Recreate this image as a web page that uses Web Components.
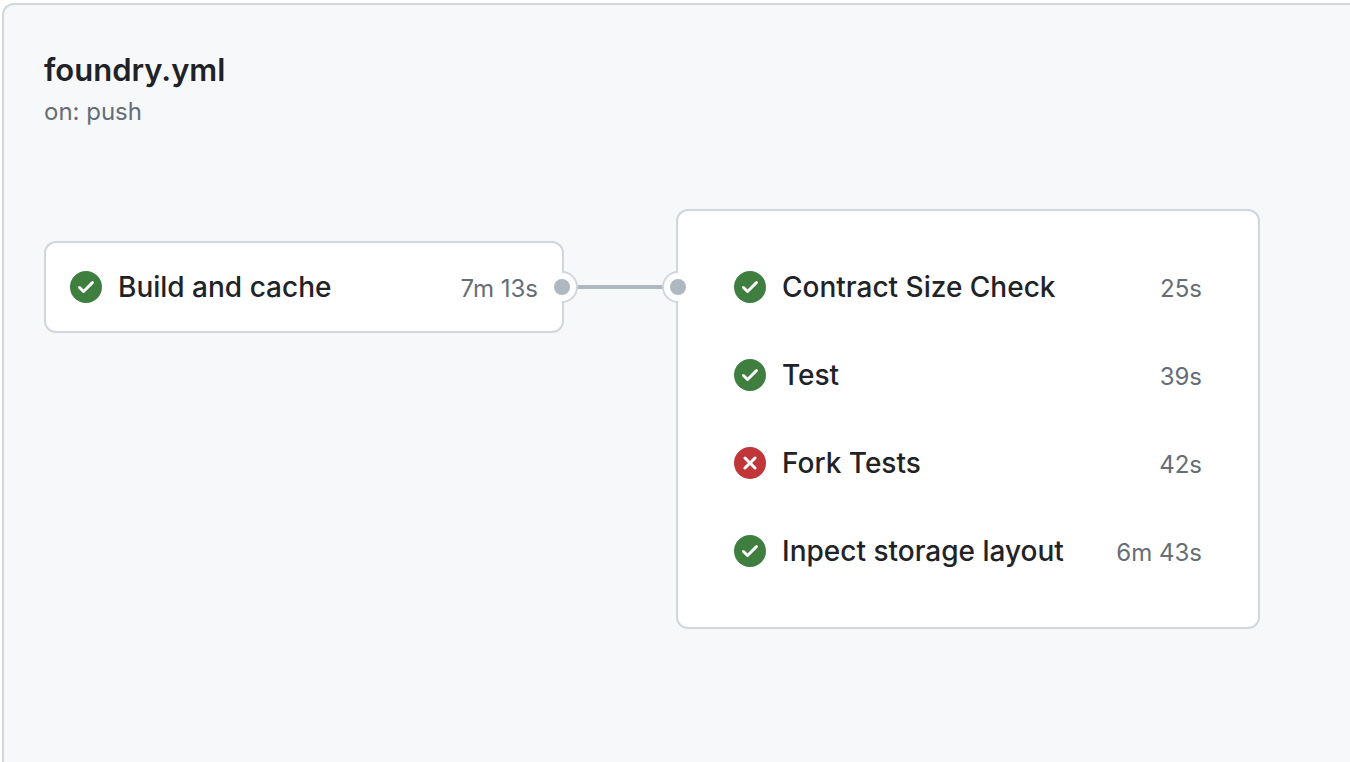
<!DOCTYPE html>
<html lang="en">
<head>
<meta charset="utf-8">
<meta name="viewport" content="width=device-width, initial-scale=1">
<title>foundry.yml</title>
<style>
  html { background: #fff; }
  body {
    margin: 0;
    min-height: 100vh;
    display: flex;
    box-sizing: border-box;
    padding: 3px 0 0 2px;
    font-family: Inter, "Noto Sans", sans-serif;
    color: #1f2328;
    --line: #d0d7de;
    --muted: #656d76;
    --port: #afb8c1;
    --success: #3e7f40;
    --failure: #c03639;
  }
</style>
</head>
<body>
<workflow-panel>
  <span slot="title">foundry.yml</span>
  <span slot="trigger">on: push</span>
  <job-card class="single" port="right">
    <job-row status="success" duration="7m 13s">Build and cache</job-row>
  </job-card>
  <job-link></job-link>
  <job-card class="group" port="left">
    <job-row status="success" duration="25s">Contract Size Check</job-row>
    <job-row status="success" duration="39s">Test</job-row>
    <job-row status="failure" duration="42s">Fork Tests</job-row>
    <job-row status="success" duration="6m 43s">Inpect storage layout</job-row>
  </job-card>
</workflow-panel>

<script>
class ShadowElement extends HTMLElement {
  constructor() {
    super();
    this.attachShadow({ mode: "open" });
  }
  connectedCallback() {
    this.shadowRoot.innerHTML = this.render();
  }
}

class WorkflowPanel extends ShadowElement {
  render() {
    return `
      <style>
        :host {
          display: block;
          flex: 1;
          box-sizing: border-box;
          padding: 40px;
          background: #f6f8fa;
          border: solid var(--line);
          border-width: 2px 0 0 2px;
          border-top-left-radius: 12px;
        }
        h1 { margin: 0; font-size: 31px; line-height: 50px; font-weight: 600; }
        p { margin: 0; font-size: 24px; line-height: 34px; color: var(--muted); }
        .graph { display: flex; align-items: flex-start; margin-top: 80px; }
        ::slotted(.single) { flex: 0 1 520px; margin-top: 32px; }
        ::slotted(.group) { flex: 0 1 584px; --card-padding: 32px; --port-top: 60px; }
      </style>
      <header>
        <h1><slot name="title"></slot></h1>
        <p><slot name="trigger"></slot></p>
      </header>
      <main class="graph"><slot></slot></main>`;
  }
}

class JobCard extends ShadowElement {
  render() {
    return `
      <style>
        :host {
          display: block;
          position: relative;
          box-sizing: border-box;
          padding: var(--card-padding, 0);
          background: #fff;
          border: 2px solid var(--line);
          border-radius: 12px;
        }
        .port {
          position: absolute;
          top: var(--port-top, 28px);
          width: 16px;
          height: 32px;
          box-sizing: border-box;
          background: #fff;
          border: 2px solid var(--line);
        }
        .port::after {
          content: "";
          position: absolute;
          top: 6px;
          width: 16px;
          height: 16px;
          border-radius: 50%;
          background: var(--port);
        }
        .right { left: 100%; border-left: 0; border-radius: 0 16px 16px 0; }
        .right::after { left: -8px; }
        .left { right: 100%; border-right: 0; border-radius: 16px 0 0 16px; }
        .left::after { right: -8px; }
      </style>
      <slot></slot>
      <span class="port ${this.getAttribute("port")}"></span>`;
  }
}

class JobLink extends ShadowElement {
  render() {
    return `
      <style>
        :host {
          display: block;
          flex: 0 0 112px;
          height: 4px;
          margin-top: 76px;
          background: var(--port);
        }
      </style>`;
  }
}

class JobRow extends ShadowElement {
  render() {
    return `
      <style>
        :host { display: block; }
        a {
          display: flex;
          align-items: baseline;
          gap: 16px;
          padding: 0 24px;
          line-height: 88px;
          white-space: nowrap;
          color: inherit;
          text-decoration: none;
        }
        status-icon { align-self: center; }
        .name { flex: 1; font-size: 28px; font-weight: 500; }
        .time { font-size: 24px; line-height: 40px; color: var(--muted); }
      </style>
      <a href="#">
        <status-icon status="${this.getAttribute("status")}"></status-icon>
        <span class="name"><slot></slot></span>
        <span class="time">${this.getAttribute("duration")}</span>
      </a>`;
  }
}

const STATUS_PATHS = {
  success: "M8 16A8 8 0 1 0 8 0a8 8 0 0 0 0 16zm3.78-9.72a.75.75 0 0 0-1.06-1.06L6.75 9.19 5.28 7.72a.75.75 0 0 0-1.06 1.06l2 2a.75.75 0 0 0 1.06 0l4.5-4.5z",
  failure: "M2.343 13.657A8 8 0 1 1 13.658 2.343 8 8 0 0 1 2.343 13.657ZM6.03 4.97a.751.751 0 0 0-1.042.018.751.751 0 0 0-.018 1.042L6.94 8 4.97 9.97a.749.749 0 0 0 .326 1.275.749.749 0 0 0 .734-.215L8 9.06l1.97 1.97a.749.749 0 0 0 1.275-.326.749.749 0 0 0-.215-.734L9.06 8l1.97-1.97a.749.749 0 0 0-.326-1.275.749.749 0 0 0-.734.215L8 6.94Z"
};

class StatusIcon extends ShadowElement {
  render() {
    const status = this.getAttribute("status");
    return `
      <style>
        :host { display: block; flex: none; width: 32px; height: 32px; }
        svg { display: block; width: 100%; height: 100%; fill: var(--${status}); }
      </style>
      <svg viewBox="0 0 16 16" role="img" aria-label="${status}"><path fill-rule="evenodd" d="${STATUS_PATHS[status]}"/></svg>`;
  }
}

customElements.define("status-icon", StatusIcon);
customElements.define("job-row", JobRow);
customElements.define("job-link", JobLink);
customElements.define("job-card", JobCard);
customElements.define("workflow-panel", WorkflowPanel);
</script>
</body>
</html>
